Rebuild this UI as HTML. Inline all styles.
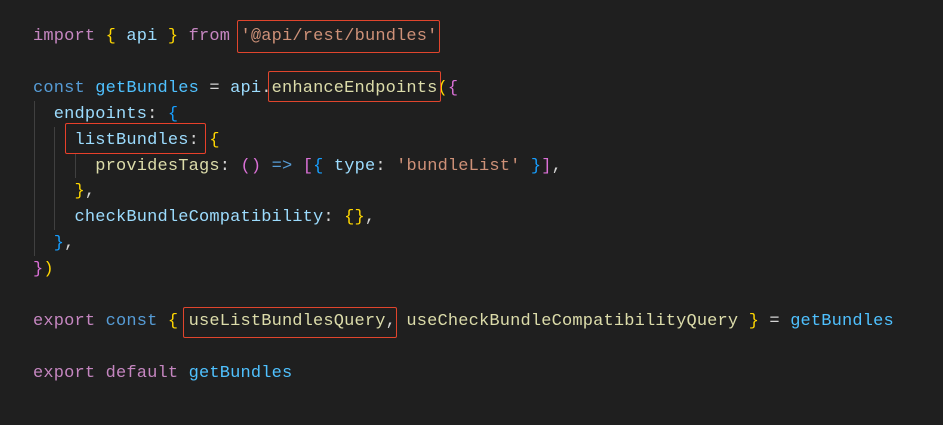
<!DOCTYPE html>
<html><head><style>
html,body{margin:0;padding:0;background:#1f1f1f;width:943px;height:425px;overflow:hidden}
pre{position:absolute;left:33px;top:24px;margin:0;font-family:"Liberation Mono",monospace;font-size:17px;letter-spacing:0.17px;line-height:25.9px;color:#d4d4d4}
.k{color:#c586c0}.c{color:#569cd6}.v{color:#9cdcfe}.n{color:#4fc1ff}.f{color:#dcdcaa}.s{color:#ce9178}
.y{color:#ffd700}.p{color:#da70d6}.b{color:#179fff}
.g{position:absolute;width:1px;background:#404040}
.box{position:absolute;border:1px solid #e0452d;border-radius:2px}
</style></head><body>
<div class="g" style="left:34px;top:101px;height:155px"></div>
<div class="g" style="left:54px;top:127px;height:103px"></div>
<div class="g" style="left:75px;top:153px;height:25px"></div>
<pre><span class="k">import</span> <span class="y">{</span> <span class="v">api</span> <span class="y">}</span> <span class="k">from</span> <span class="s">'@api/rest/bundles'</span>

<span class="c">const</span> <span class="n">getBundles</span> = <span class="v">api</span>.<span class="f">enhanceEndpoints</span><span class="y">(</span><span class="p">{</span>
  <span class="v">endpoints</span>: <span class="b">{</span>
    <span class="v">listBundles</span>: <span class="y">{</span>
      <span class="f">providesTags</span>: <span class="p">()</span> <span class="c">=&gt;</span> <span class="p">[</span><span class="b">{</span> <span class="v">type</span>: <span class="s">'bundleList'</span> <span class="b">}</span><span class="p">]</span>,
    <span class="y">}</span>,
    <span class="v">checkBundleCompatibility</span>: <span class="y">{}</span>,
  <span class="b">}</span>,
<span class="p">}</span><span class="y">)</span>

<span class="k">export</span> <span class="c">const</span> <span class="y">{</span> <span class="f">useListBundlesQuery</span>, <span class="f">useCheckBundleCompatibilityQuery</span> <span class="y">}</span> = <span class="n">getBundles</span>

<span class="k">export</span> <span class="k">default</span> <span class="n">getBundles</span></pre>
<div class="box" style="left:237px;top:20px;width:201px;height:31px"></div>
<div class="box" style="left:268px;top:71px;width:171px;height:29px"></div>
<div class="box" style="left:65px;top:123px;width:139px;height:29px;border-color:#e8402a"></div>
<div class="box" style="left:183px;top:307px;width:212px;height:29px"></div>
</body></html>
